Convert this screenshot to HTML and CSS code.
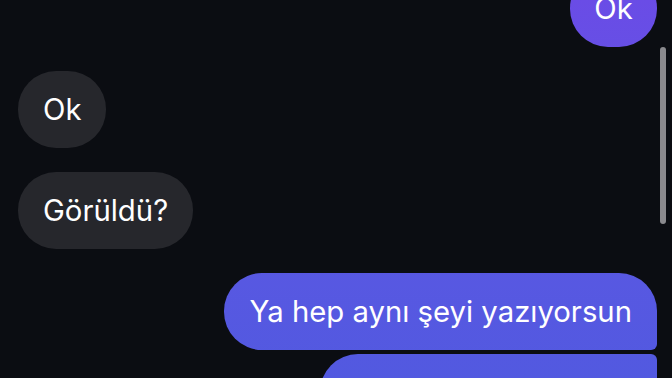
FILE: index.html
```html
<!DOCTYPE html>
<html lang="tr">
<head>
    <meta charset="UTF-8">
    <meta name="viewport" content="width=device-width, initial-scale=1.0">
    <title>Sohbet</title>
    <link rel="stylesheet" href="styles.css">
</head>
<body>
    <!-- mesaj listesi -->
    <div class="chat">
        <div class="msg me single">Ok</div>

        <div class="group">
            <div class="msg them">Ok</div>
        </div>
        <div class="group">
            <div class="msg them">Görüldü?</div>
        </div>

        <div class="group right">
            <div class="msg me first">Ya hep aynı şeyi yazıyorsun</div>
            <div class="msg me last">Başka ne diyeyim</div>
        </div>
    </div>

    <!-- kaydırma çubuğu -->
    <div class="scrollbar"></div>
</body>
</html>
```

FILE: styles.css
```css
*{
    margin: 0;
    padding: 0;
    box-sizing: border-box;
}
body{
    width: 672px;
    height: 378px;
    overflow: hidden;
    background-color: #0b0d12;
    font-family: "Inter", "Liberation Sans", sans-serif;
}
.chat{
    display: flex;
    flex-direction: column;
    gap: 24px;
    margin-top: -30px;
    padding: 0 15px 0 18px;
}
.group{
    display: flex;
    flex-direction: column;
    align-items: flex-start;
    gap: 4px;
}
.group.right{
    align-items: flex-end;
}
.msg{
    height: 77px;
    line-height: 77px;
    padding: 0 25px;
    font-size: 29.3px;
    color: #fff;
    border-radius: 38px;
    white-space: nowrap;
}
.them{
    background-color: #26272c;
}
.me{
    background: linear-gradient(180deg, #6a4ce6 0%, #5c57e3 50%, #5259e0 100%);
    background-attachment: fixed;
}
.single{
    align-self: flex-end;
    width: 87px;
    text-align: center;
    padding: 0;
}
.first{
    border-bottom-right-radius: 6px;
}
.last{
    width: 337px;
    border-top-right-radius: 6px;
}
.scrollbar{
    position: fixed;
    top: 47px;
    left: 660px;
    width: 6px;
    height: 177px;
    border-radius: 3px;
    background-color: #8a8a8e;
}
```
